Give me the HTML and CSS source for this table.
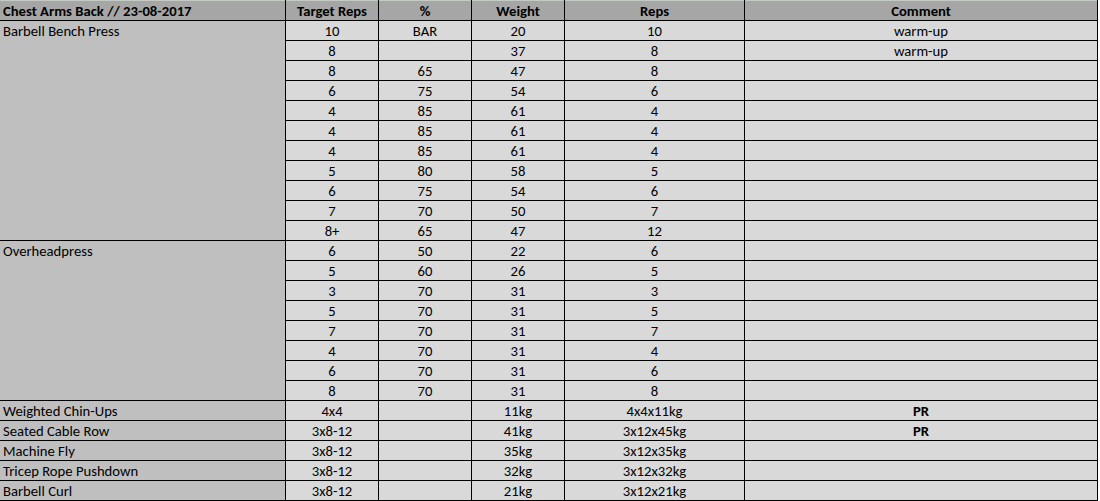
FILE: index.html
```html
<!DOCTYPE html>
<html>
<head>
<meta charset="utf-8">
<link rel="stylesheet" href="styles.css">
</head>
<body>
<div class="sheet">
  <div class="c hd left">Chest Arms Back // 23-08-2017</div>
  <div class="c hd">Target Reps</div>
  <div class="c hd">%</div>
  <div class="c hd">Weight</div>
  <div class="c hd">Reps</div>
  <div class="c hd">Comment</div>

  <div class="c ex span-11">Barbell Bench Press</div>
  <div class="c">10</div><div class="c">BAR</div><div class="c">20</div><div class="c">10</div><div class="c">warm-up</div>
  <div class="c">8</div><div class="c"></div><div class="c">37</div><div class="c">8</div><div class="c">warm-up</div>
  <div class="c">8</div><div class="c">65</div><div class="c">47</div><div class="c">8</div><div class="c"></div>
  <div class="c">6</div><div class="c">75</div><div class="c">54</div><div class="c">6</div><div class="c"></div>
  <div class="c">4</div><div class="c">85</div><div class="c">61</div><div class="c">4</div><div class="c"></div>
  <div class="c">4</div><div class="c">85</div><div class="c">61</div><div class="c">4</div><div class="c"></div>
  <div class="c">4</div><div class="c">85</div><div class="c">61</div><div class="c">4</div><div class="c"></div>
  <div class="c">5</div><div class="c">80</div><div class="c">58</div><div class="c">5</div><div class="c"></div>
  <div class="c">6</div><div class="c">75</div><div class="c">54</div><div class="c">6</div><div class="c"></div>
  <div class="c">7</div><div class="c">70</div><div class="c">50</div><div class="c">7</div><div class="c"></div>
  <div class="c">8+</div><div class="c">65</div><div class="c">47</div><div class="c">12</div><div class="c"></div>

  <div class="c ex span-8">Overheadpress</div>
  <div class="c">6</div><div class="c">50</div><div class="c">22</div><div class="c">6</div><div class="c"></div>
  <div class="c">5</div><div class="c">60</div><div class="c">26</div><div class="c">5</div><div class="c"></div>
  <div class="c">3</div><div class="c">70</div><div class="c">31</div><div class="c">3</div><div class="c"></div>
  <div class="c">5</div><div class="c">70</div><div class="c">31</div><div class="c">5</div><div class="c"></div>
  <div class="c">7</div><div class="c">70</div><div class="c">31</div><div class="c">7</div><div class="c"></div>
  <div class="c">4</div><div class="c">70</div><div class="c">31</div><div class="c">4</div><div class="c"></div>
  <div class="c">6</div><div class="c">70</div><div class="c">31</div><div class="c">6</div><div class="c"></div>
  <div class="c">8</div><div class="c">70</div><div class="c">31</div><div class="c">8</div><div class="c"></div>

  <div class="c ex">Weighted Chin-Ups</div>
  <div class="c">4x4</div><div class="c"></div><div class="c">11kg</div><div class="c">4x4x11kg</div><div class="c b">PR</div>
  <div class="c ex">Seated Cable Row</div>
  <div class="c">3x8-12</div><div class="c"></div><div class="c">41kg</div><div class="c">3x12x45kg</div><div class="c b">PR</div>
  <div class="c ex">Machine Fly</div>
  <div class="c">3x8-12</div><div class="c"></div><div class="c">35kg</div><div class="c">3x12x35kg</div><div class="c"></div>
  <div class="c ex">Tricep Rope Pushdown</div>
  <div class="c">3x8-12</div><div class="c"></div><div class="c">32kg</div><div class="c">3x12x32kg</div><div class="c"></div>
  <div class="c ex">Barbell Curl</div>
  <div class="c">3x8-12</div><div class="c"></div><div class="c">21kg</div><div class="c">3x12x21kg</div><div class="c"></div>
</div>
</body>
</html>
```

FILE: styles.css
```css
html, body {
  margin: 0;
  padding: 0;
  background: #ffffff;
}

.sheet {
  display: grid;
  grid-template-columns: 286px 93px 93px 93px 180px 353px;
  grid-template-rows: 21px;
  grid-auto-rows: 20px;
  width: 1098px;
  font-family: Calibri, Carlito, Lato, "Liberation Sans", sans-serif;
  font-size: 14.67px;
  color: #000;
}

.c {
  box-sizing: border-box;
  border-right: 1px solid #000;
  border-bottom: 1px solid #000;
  background: #d9d9d9;
  text-align: center;
  line-height: 21px;
  white-space: nowrap;
  overflow: hidden;
}

.hd {
  background: #a6a6a6;
  font-weight: bold;
  line-height: 22px;
  box-shadow: inset 0 1px 0 #c4cbc4;
}

.left {
  text-align: left;
  padding-left: 3px;
}

.ex {
  background: #bfbfbf;
  text-align: left;
  padding-left: 3px;
}

.span-11 {
  grid-row: span 11;
}

.span-8 {
  grid-row: span 8;
}

.b {
  font-weight: bold;
}
```
